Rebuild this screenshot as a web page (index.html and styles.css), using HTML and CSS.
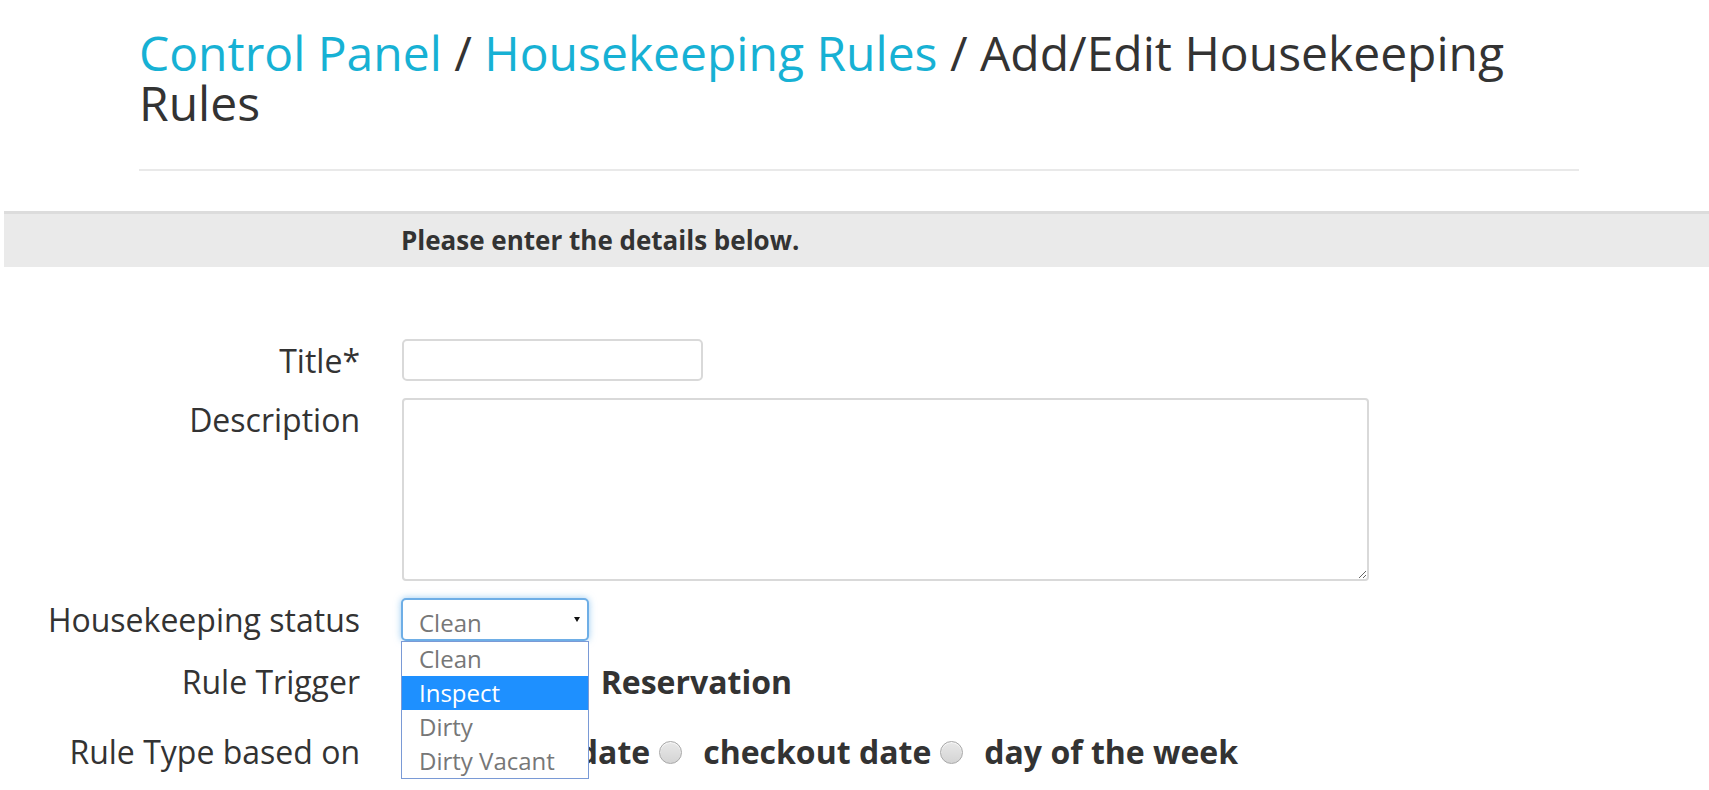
FILE: index.html
```html
<!DOCTYPE html>
<html lang="en">
<head>
<meta charset="utf-8">
<title>Add/Edit Housekeeping Rules</title>
<link rel="stylesheet" href="styles.css">
</head>
<body>
<header class="page-header">
  <h1 class="crumbs"><a class="crumb-link" href="#">Control Panel</a> / <a class="crumb-link" href="#">Housekeeping Rules</a> / Add/Edit Housekeeping Rules</h1>
  <hr class="divider">
</header>

<div class="band"><span class="band-text">Please enter the details below.</span></div>

<form class="form">
  <div class="row">
    <label class="label" for="title">Title*</label>
    <div class="control"><input id="title" class="input" type="text"></div>
  </div>
  <div class="row">
    <label class="label" for="desc">Description</label>
    <div class="control"><textarea id="desc" class="textarea"></textarea></div>
  </div>
  <div class="row">
    <span class="label">Housekeeping status</span>
    <div class="control">
      <div class="select-wrap">
        <div class="select">Clean</div>
        <ul class="select-list">
          <li class="option">Clean</li>
          <li class="option option-active">Inspect</li>
          <li class="option">Dirty</li>
          <li class="option">Dirty Vacant</li>
        </ul>
      </div>
    </div>
  </div>
  <div class="row row-trigger">
    <span class="label">Rule Trigger</span>
    <div class="control radio-group">
      <span class="radio"></span><span class="radio-label">Status</span>
      <span class="radio"></span><span class="radio-label">Reservation</span>
    </div>
  </div>
  <div class="row">
    <span class="label">Rule Type based on</span>
    <div class="control radio-group">
      <span class="radio"></span><span class="radio-label">checkin date</span>
      <span class="radio"></span><span class="radio-label">checkout date</span>
      <span class="radio"></span><span class="radio-label">day of the week</span>
    </div>
  </div>
</form>
</body>
</html>
```

FILE: styles.css
```css
html, body {
  margin: 0;
  padding: 0;
  background: #fff;
}
body {
  font-family: "Open Sans", "Liberation Sans", sans-serif;
  color: #333;
  overflow: hidden;
}

.page-header {
  padding: 28px 0 0 139px;
  width: 1440px;
}
.crumbs {
  margin: 0;
  font-size: 48px;
  line-height: 50px;
  font-weight: 400;
  color: #333;
}
.crumb-link {
  color: #17b1d4;
  text-decoration: none;
}
.divider {
  margin: 41px 0 0 0;
  border: 0;
  border-top: 2px solid #e9e9e9;
  height: 0;
}

.band {
  margin: 40px 0 0 4px;
  border-top: 3px solid #dcdcdc;
  background: #eaeaea;
  height: 53px;
  padding-left: 397px;
}
.band-text {
  font-size: 26px;
  font-weight: 700;
  line-height: 53px;
  color: #333;
}

.form {
  margin-top: 72px;
  padding-bottom: 18px;
  display: flex;
  flex-direction: column;
  gap: 17px;
}
.row {
  display: grid;
  grid-template-columns: 360px 1fr;
  column-gap: 42px;
  align-items: start;
}
.row-trigger {
  padding-top: 2px;
  min-height: 53px;
}
.label {
  font-size: 32px;
  line-height: 42px;
  padding-top: 1px;
  margin-bottom: -1px;
  text-align: right;
  color: #333;
}

.input {
  display: block;
  box-sizing: border-box;
  width: 301px;
  height: 42px;
  border: 2px solid #d9d9d9;
  border-radius: 5px;
  margin: 0;
  padding: 4px 12px;
  font: inherit;
  font-size: 24px;
}
.textarea {
  display: block;
  box-sizing: border-box;
  width: 967px;
  height: 183px;
  border: 2px solid #d9d9d9;
  border-radius: 4px;
  margin: 0;
  padding: 6px 12px;
  font: inherit;
  font-size: 24px;
}

.select-wrap {
  position: relative;
  width: 188px;
  margin-left: -1px;
}
.select {
  position: relative;
  box-sizing: border-box;
  height: 43px;
  border: 2px solid #6eaee6;
  border-radius: 5px;
  box-shadow: 0 0 7px rgba(102, 175, 233, 0.65);
  padding: 6px 0 0 16px;
  font-size: 24px;
  line-height: 33px;
  color: #777;
  background: #fff;
}
.select::after {
  content: "";
  position: absolute;
  right: 7px;
  top: 17px;
  border-left: 3px solid transparent;
  border-right: 3px solid transparent;
  border-top: 5px solid #111;
}
.select-list {
  position: absolute;
  top: 100%;
  left: 0;
  z-index: 5;
  box-sizing: border-box;
  width: 188px;
  margin: 0;
  padding: 0;
  list-style: none;
  background: #fff;
  border: 1px solid #7a9ad6;
}
.option {
  height: 34px;
  line-height: 34px;
  padding-left: 17px;
  font-size: 24px;
  color: #777;
}
.option-active {
  background: #1e90ff;
  color: #fff;
}

.radio-group {
  display: flex;
  align-items: center;
  height: 44px;
}
.radio {
  box-sizing: border-box;
  width: 23px;
  height: 23px;
  border-radius: 50%;
  border: 1px solid #a8a8a8;
  background: linear-gradient(#e8e8e8, #d4d4d4);
  box-shadow: inset 0 1px 1px rgba(255, 255, 255, 0.8);
  margin-right: 21px;
  flex: none;
}
.radio-label {
  font-size: 32px;
  font-weight: 700;
  line-height: 44px;
  margin-right: 9px;
  color: #333;
}
```
